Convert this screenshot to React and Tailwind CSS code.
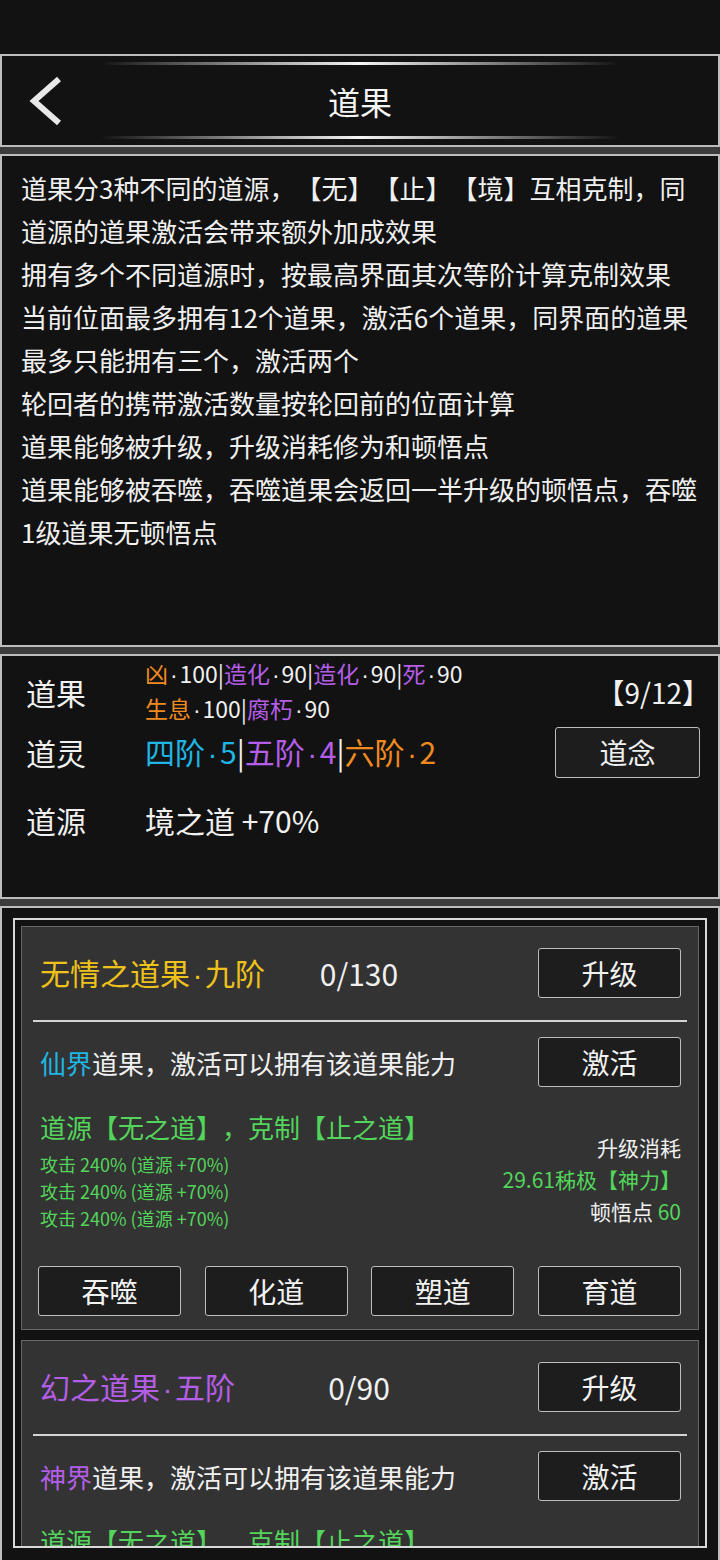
const purple = "text-[#b45ee8]";
const orange = "text-[#ef8a20]";
const cyan = "text-[#1fb5e4]";
const green = "text-[#53d55b]";

// narrow middle dot, as in the reference (CJK font draws it full width)
const D = () => <span className="inline-block w-[0.5em] text-center font-['Liberation_Sans',sans-serif]">·</span>;

const Btn = ({ children }) => (
  <div className="flex items-center justify-center w-[143px] h-[50px] bg-[#1d1d1d] border-[1.5px] border-[#bdbdbd] rounded-[3px] text-[28px] leading-none text-[#f2f2f2]">
    {children}
  </div>
);

const description = [
  "道果分3种不同的道源，【无】【止】【境】互相克制，同",
  "道源的道果激活会带来额外加成效果",
  "拥有多个不同道源时，按最高界面其次等阶计算克制效果",
  "当前位面最多拥有12个道果，激活6个道果，同界面的道果",
  "最多只能拥有三个，激活两个",
  "轮回者的携带激活数量按轮回前的位面计算",
  "道果能够被升级，升级消耗修为和顿悟点",
  "道果能够被吞噬，吞噬道果会返回一半升级的顿悟点，吞噬",
  "1级道果无顿悟点",
];

const W = ({ children }) => <span className="text-[#f0f0f0]">{children}</span>;

const FruitCard = ({ name, grade, nameColor, count, realm, realmColor, full }) => (
  <div className="bg-[#333333] border border-[#686868] pl-[18px] pr-[17px] pt-[21px] pb-[13px]">
    <div className="flex items-center h-[50px]">
      <span className={`w-[239px] text-[30px] whitespace-nowrap ${nameColor}`}>
        {name}
        <D />
        {grade}
      </span>
      <span className="w-[160px] text-center text-[30px] text-[#f0f0f0]">{count}</span>
      <div className="ml-auto">
        <Btn>升级</Btn>
      </div>
    </div>
    <div className="h-[2px] bg-[#d4d4d4] mt-[22px] ml-[-7px] mr-[-6px]" />
    <div className="flex items-center h-[50px] mt-[15px]">
      <span className="text-[26px] text-[#f0f0f0]">
        <span className={realmColor}>{realm}</span>道果，激活可以拥有该道果能力
      </span>
      <div className="ml-auto">
        <Btn>激活</Btn>
      </div>
    </div>
    <div className="flex items-start mt-[22px]">
      <div className="flex flex-col">
        <div className={`text-[26px] leading-[36px] whitespace-nowrap ${green}`}>道源【无之道】，克制【止之道】</div>
        {full && (
          <div className={`mt-[6px] text-[18px] leading-[27px] ${green}`}>
            <div>攻击 240% (道源 +70%)</div>
            <div>攻击 240% (道源 +70%)</div>
            <div>攻击 240% (道源 +70%)</div>
          </div>
        )}
      </div>
      {full && (
        <div className="ml-auto mt-[22px] flex flex-col items-end leading-[32px]">
          <div className="text-[21px] text-[#f0f0f0]">升级消耗</div>
          <div className={`text-[21px] ${green}`}>29.61秭极【神力】</div>
          <div className="text-[21px] text-[#f0f0f0]">
            顿悟点 <span className={green}>60</span>
          </div>
        </div>
      )}
    </div>
    {full && (
      <div className="flex justify-between mt-[34px] ml-[-2px]">
        <Btn>吞噬</Btn>
        <Btn>化道</Btn>
        <Btn>塑道</Btn>
        <Btn>育道</Btn>
      </div>
    )}
  </div>
);

export default function App() {
  return (
    <div className="w-[720px] h-[1560px] overflow-hidden bg-[#3c3c3c] flex flex-col font-['Noto_Sans_CJK_SC',sans-serif] text-[#f0f0f0] [text-spacing-trim:space-all]">
      <div className="h-[54px] bg-[#121212] shrink-0" />

      {/* header */}
      <div className="h-[93px] shrink-0 bg-[#121212] border-2 border-[#bdbdbd] flex flex-col">
        <div className="mt-[6px] mx-[98px] h-[3px] bg-gradient-to-r from-transparent via-[#f5f5f5] to-transparent" />
        <div className="flex-1 flex items-center">
          <div className="w-[100px] pl-[24px] flex items-center">
            <svg width="36" height="50" viewBox="0 0 36 50" fill="none">
              <polyline points="33,3 8,25 33,47" stroke="#e8e8e8" strokeWidth="6" strokeLinejoin="miter" />
            </svg>
          </div>
          <div className="flex-1 text-center text-[32px] text-[#f5f5f5]">道果</div>
          <div className="w-[100px]" />
        </div>
        <div className="mb-[6px] mx-[98px] h-[3px] bg-gradient-to-r from-transparent via-[#f5f5f5] to-transparent" />
      </div>

      {/* description */}
      <div className="mt-[7px] h-[493px] shrink-0 bg-[#121212] border-2 border-[#bdbdbd] pl-[19px] pt-[10px] text-[26px] leading-[43px] text-[#f0f0f0]">
        {description.map((line, i) => (
          <div key={i} className="whitespace-nowrap">{line}</div>
        ))}
      </div>

      {/* stats */}
      <div className="mt-[7px] h-[245px] shrink-0 bg-[#121212] border-2 border-[#bdbdbd] pl-[24px] pr-[18px] pt-[3px]">
        <div className="flex items-center h-[66px]">
          <span className="w-[119px] text-[30px]">道果</span>
          <div className="text-[23px] leading-[33px] whitespace-nowrap">
            <div>
              <span className={orange}>凶</span><W><D />100|</W>
              <span className={purple}>造化</span><W><D />90|</W>
              <span className={purple}>造化</span><W><D />90|</W>
              <span className={purple}>死</span><W><D />90</W>
            </div>
            <div>
              <span className={orange}>生息</span><W><D />100|</W>
              <span className={purple}>腐朽</span><W><D />90</W>
            </div>
          </div>
          <span className="ml-auto mr-[-10px] text-[28px]">【9/12】</span>
        </div>
        <div className="flex items-center h-[54px]">
          <span className="w-[119px] text-[30px]">道灵</span>
          <span className="text-[30px]">
            <span className={cyan}>四阶<D />5</span>|<span className={purple}>五阶<D />4</span>|<span className={orange}>六阶<D />2</span>
          </span>
          <div className="ml-auto flex items-center justify-center w-[145px] h-[51px] bg-[#1d1d1d] border-[1.5px] border-[#bdbdbd] rounded-[3px] text-[28px] leading-none">
            道念
          </div>
        </div>
        <div className="flex items-center h-[43px] mt-[20px]">
          <span className="w-[119px] text-[30px]">道源</span>
          <span className="text-[30px]">境之道 +70%</span>
        </div>
      </div>

      {/* fruit list */}
      <div className="mt-[7px] flex-1 bg-[#121212] border-2 border-b-0 border-[#bdbdbd] pt-[10px] px-[11px]">
        <div className="h-[630px] overflow-hidden border-2 border-[#d8d8d8] p-[6px] flex flex-col gap-[10px]">
          <FruitCard name="无情之道果" grade="九阶" nameColor="text-[#eec21a]" count="0/130" realm="仙界" realmColor={cyan} full />
          <FruitCard name="幻之道果" grade="五阶" nameColor={purple} count="0/90" realm="神界" realmColor={purple} />
        </div>
      </div>
    </div>
  );
}
